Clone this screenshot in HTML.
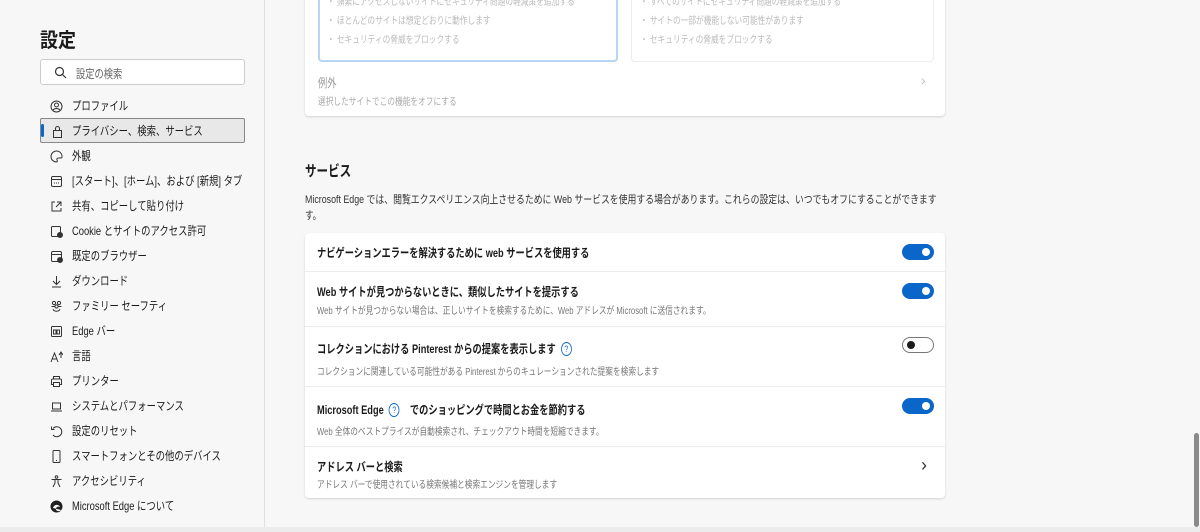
<!DOCTYPE html>
<html><head><meta charset="utf-8"><style>
*{margin:0;padding:0;box-sizing:border-box}
body{width:1200px;height:532px;overflow:hidden;background:#f7f7f7;font-family:"Liberation Sans","Noto Sans CJK JP",sans-serif;color:#1b1b1b;position:relative}
.a{position:absolute;white-space:nowrap}
.x{transform:scaleX(.77);transform-origin:0 50%}
.side{position:absolute;left:0;top:0;width:265px;height:527px;border-right:1px solid #e0e0e0}
.it{position:absolute;left:40px;width:205px;height:25px;font-size:12px;line-height:27px;padding-left:32px;white-space:nowrap;overflow:visible}
.it span{display:inline-block;transform:scaleX(.78);transform-origin:0 50%}
.ic{position:absolute;left:10px;top:7px;width:13px;height:13px}
.card{position:absolute;left:305px;width:640px;background:#fff;border-radius:4px;box-shadow:0 1px 2px rgba(0,0,0,.15)}
.row{position:absolute;left:0;width:640px;border-top:1px solid #ececec}
.t{font-size:12px;font-weight:bold;color:#1b1b1b}
.s{font-size:10px;color:#777}
.tg{position:absolute;left:597px;width:32px;height:16px;border-radius:8px;background:#0a66c8}
.tg::after{content:"";position:absolute;right:4px;top:4px;width:8px;height:8px;border-radius:50%;background:#fff}
.tg.off{background:#fff;border:1px solid #777}
.tg.off::after{left:4px;top:3px;right:auto;background:#1b1b1b}
.q{display:inline-block;width:14px;height:14px;border:1px solid #0a66c8;border-radius:50%;color:#0a66c8;font-size:9px;line-height:12px;text-align:center;font-weight:normal;vertical-align:1px}
.g{font-size:10px;color:#bbb}
</style></head><body>
<div class="side">
<div class="a" style="left:40px;top:24px;font-size:20px;font-weight:bold;transform:scaleX(.9);transform-origin:0 50%">設定</div>
<div class="a" style="left:40px;top:59px;width:205px;height:26px;background:#fff;border:1px solid #ccc;border-radius:3px">
<svg class="a" style="left:13px;top:6px" width="13" height="13" viewBox="0 0 13 13" fill="none" stroke="#333" stroke-width="1.2"><circle cx="5.5" cy="5.5" r="4"/><path d="M8.5 8.5l3.5 3.5"/></svg>
<span class="a x" style="left:35px;top:5px;font-size:12px;color:#666">設定の検索</span></div>
<div class="it" style="top:93px"><svg class="ic" viewBox="0 0 13 13" fill="none" stroke="#333"><circle cx="6.5" cy="6.5" r="5.5"/><circle cx="6.5" cy="5" r="2"/><path d="M3 10c2-2 5-2 7 0"/></svg><span>プロファイル</span></div>
<div class="it" style="top:118px;background:#e8e8e8;border:1px solid #888;border-radius:2px;padding-left:31px;line-height:25px"><div class="a" style="left:0;top:5px;width:3px;height:13px;background:#0a66c8;border-radius:2px"></div><svg class="ic" style="top:6px" viewBox="0 0 13 13" fill="none" stroke="#333"><rect x="2.5" y="5.5" width="8" height="7"/><path d="M4.5 5.5V3.5a2 2 0 014 0v2"/></svg><span>プライバシー、検索、サービス</span></div>
<div class="it" style="top:143px"><svg class="ic" viewBox="0 0 13 13" fill="none" stroke="#333"><path d="M6.5 1a5.5 5.5 0 100 11c1 0 1-1 .5-2s0-2 1.5-2h2.5a1 1 0 001-1A5.5 5.5 0 006.5 1z"/></svg><span>外観</span></div>
<div class="it" style="top:168px"><svg class="ic" viewBox="0 0 13 13" fill="none" stroke="#333"><rect x="1.5" y="1.5" width="10" height="10" rx="1.5"/><path d="M1.5 4.5h10M4 8h1M6 8h1M8 8h1"/></svg><span>[スタート]、[ホーム]、および [新規] タブ</span></div>
<div class="it" style="top:193px"><svg class="ic" viewBox="0 0 13 13" fill="none" stroke="#333"><path d="M5 2H2v9h9V8M7 2h4v4M11 2L6 7"/></svg><span>共有、コピーして貼り付け</span></div>
<div class="it" style="top:218px"><svg class="ic" viewBox="0 0 13 13" fill="none" stroke="#333"><rect x="1.5" y="1.5" width="9" height="10" rx="1"/><circle cx="10" cy="10" r="2.5" fill="#333"/></svg><span>Cookie とサイトのアクセス許可</span></div>
<div class="it" style="top:243px"><svg class="ic" viewBox="0 0 13 13" fill="none" stroke="#333"><rect x="1.5" y="1.5" width="10" height="10" rx="1.5"/><path d="M1.5 4.5h10"/><circle cx="10" cy="10" r="2.5" fill="#333"/></svg><span>既定のブラウザー</span></div>
<div class="it" style="top:268px"><svg class="ic" viewBox="0 0 13 13" fill="none" stroke="#333"><path d="M6.5 1v8M3 6l3.5 3.5L10 6M2 12h9"/></svg><span>ダウンロード</span></div>
<div class="it" style="top:293px"><svg class="ic" viewBox="0 0 13 13" fill="none" stroke="#333"><circle cx="4" cy="3" r="1.6"/><circle cx="9" cy="3" r="1.6"/><circle cx="6.5" cy="6.5" r="1.6"/><path d="M1.5 6.5h3M8.5 6.5h3M3 9c1 3 6 3 7 0"/></svg><span>ファミリー セーフティ</span></div>
<div class="it" style="top:318px"><svg class="ic" viewBox="0 0 13 13" fill="none" stroke="#333"><rect x="1.5" y="1.5" width="10" height="10" rx="1"/><rect x="3.5" y="5" width="2.5" height="4"/><rect x="7" y="5" width="2.5" height="4"/></svg><span>Edge バー</span></div>
<div class="it" style="top:343px"><svg class="ic" viewBox="0 0 13 13" fill="none" stroke="#333"><path d="M1 12L4.5 3 8 12M2.5 9h4M9 5l2-3 2 3M11 2v6"/></svg><span>言語</span></div>
<div class="it" style="top:368px"><svg class="ic" viewBox="0 0 13 13" fill="none" stroke="#333"><path d="M3.5 4V1.5h6V4M3.5 9.5h-2V5a1 1 0 011-1h8a1 1 0 011 1v4.5h-2"/><rect x="3.5" y="7.5" width="6" height="4"/></svg><span>プリンター</span></div>
<div class="it" style="top:393px"><svg class="ic" viewBox="0 0 13 13" fill="none" stroke="#333"><rect x="2.5" y="3" width="8" height="6"/><path d="M1 11h11"/></svg><span>システムとパフォーマンス</span></div>
<div class="it" style="top:418px"><svg class="ic" viewBox="0 0 13 13" fill="none" stroke="#333"><path d="M3 3.5A5 5 0 113 10M1.5 1.5v3h3"/></svg><span>設定のリセット</span></div>
<div class="it" style="top:443px"><svg class="ic" viewBox="0 0 13 13" fill="none" stroke="#333"><rect x="3" y="0.5" width="7" height="12" rx="1"/><path d="M6 10.5h1"/></svg><span>スマートフォンとその他のデバイス</span></div>
<div class="it" style="top:468px"><svg class="ic" viewBox="0 0 13 13" fill="none" stroke="#333"><circle cx="6.5" cy="2" r="1.3"/><path d="M1.5 4.5h10M5 5v3l-2 4M8 5v3l2 4"/></svg><span>アクセシビリティ</span></div>
<div class="it" style="top:493px"><svg class="ic" viewBox="0 0 13 13"><circle cx="6.5" cy="6.5" r="6" fill="#222"/><path d="M3 8c1-4 6-4 7-1-2-1-4 0-4 2s3 3 5 1" fill="#fff"/></svg><span>Microsoft Edge について</span></div>
</div>

<div class="card" style="top:-10px;height:126px">
<div class="a" style="left:13px;top:0;width:300px;height:72px;border:2px solid #b8d6f3;border-radius:4px"></div>
<div class="a" style="left:326px;top:0;width:303px;height:72px;border:1px solid #eee;border-radius:4px"></div>
<div class="a g x" style="left:22px;top:3px">・ 頻繁にアクセスしないサイトにセキュリティ問題の軽減策を追加する</div>
<div class="a g x" style="left:22px;top:22px">・ ほとんどのサイトは想定どおりに動作します</div>
<div class="a g x" style="left:22px;top:41px">・ セキュリティの脅威をブロックする</div>
<div class="a g x" style="left:335px;top:3px">・ すべてのサイトにセキュリティ問題の軽減策を追加する</div>
<div class="a g x" style="left:335px;top:22px">・ サイトの一部が機能しない可能性があります</div>
<div class="a g x" style="left:335px;top:41px">・ セキュリティの脅威をブロックする</div>
<div class="a x" style="left:13px;top:84px;font-size:12px;color:#999">例外</div>
<div class="a g x" style="left:13px;top:103px;color:#aaa">選択したサイトでこの機能をオフにする</div>
<div class="a" style="left:616px;top:82px;font-size:14px;color:#bbb">›</div>
</div>

<div class="a x" style="left:305px;top:160px;font-size:15px;font-weight:bold">サービス</div>
<div class="a" style="left:305px;top:192px;font-size:11px;line-height:16px;color:#333;transform:scaleX(.805);transform-origin:0 50%">Microsoft Edge では、閲覧エクスペリエンス向上させるために Web サービスを使用する場合があります。これらの設定は、いつでもオフにすることができます</div>
<div class="a x" style="left:305px;top:208px;font-size:11px;line-height:16px;color:#333">す。</div>

<div class="card" style="top:233px;height:265px">
<div class="row" style="top:0;height:38px;border:0"><div class="a t x" style="left:12px;top:11px">ナビゲーションエラーを解決するために web サービスを使用する</div><div class="tg" style="top:11px"></div></div>
<div class="row" style="top:38px;height:55px"><div class="a t x" style="left:12px;top:11px">Web サイトが見つからないときに、類似したサイトを提示する</div><div class="a s x" style="left:12px;top:30px">Web サイトが見つからない場合は、正しいサイトを検索するために、Web アドレスが Microsoft に送信されます。</div><div class="tg" style="top:11px"></div></div>
<div class="row" style="top:93px;height:60px"><div class="a t x" style="left:12px;top:13px">コレクションにおける Pinterest からの提案を表示します &nbsp;<span class="q">?</span></div><div class="a s x" style="left:12px;top:36px">コレクションに関連している可能性がある Pinterest からのキュレーションされた提案を検索します</div><div class="tg off" style="top:10px"></div></div>
<div class="row" style="top:153px;height:60px"><div class="a t x" style="left:12px;top:14px">Microsoft Edge &nbsp;<span class="q">?</span> &nbsp;&nbsp; でのショッピングで時間とお金を節約する</div><div class="a s x" style="left:12px;top:36px">Web 全体のベストプライスが自動検索され、チェックアウト時間を短縮できます。</div><div class="tg" style="top:11px"></div></div>
<div class="row" style="top:213px;height:52px"><div class="a t x" style="left:12px;top:11px">アドレス バーと検索</div><div class="a s x" style="left:12px;top:29px">アドレス バーで使用されている検索候補と検索エンジンを管理します</div><div class="a" style="left:616px;top:8px;font-size:18px;color:#333">›</div></div>
</div>

<div class="a" style="left:0;top:527px;width:1200px;height:5px;background:#ececec"></div>
<div class="a" style="left:1194px;top:433px;width:5px;height:94px;background:#8a8a8a;border-radius:3px"></div>
</body></html>
